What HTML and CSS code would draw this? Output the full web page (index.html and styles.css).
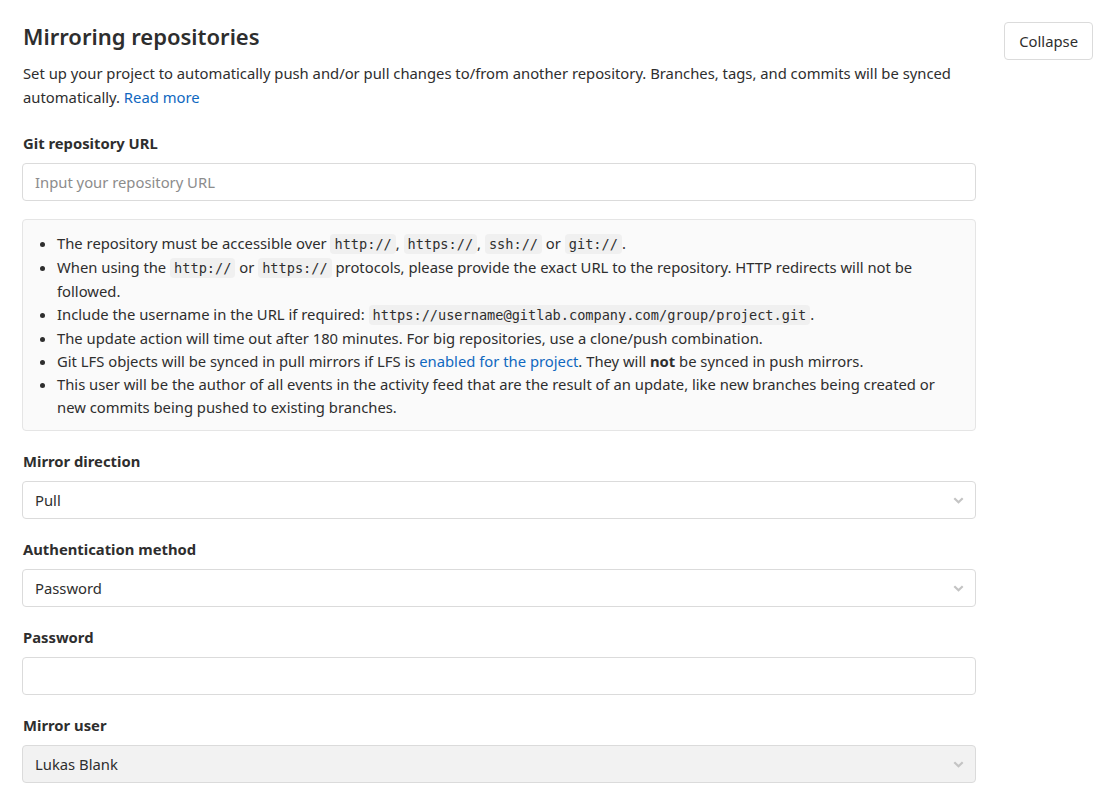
FILE: index.html
```html
<!DOCTYPE html>
<html>
<head>
<meta charset="utf-8">
<link rel="stylesheet" href="styles.css">
</head>
<body>
<div class="page">
  <div class="header">
    <div class="header-text">
      <h2 class="title">Mirroring repositories</h2>
      <p class="lead">Set up your project to automatically push and/or pull changes to/from another repository. Branches, tags, and commits will be synced automatically. <a href="#" class="link">Read more</a></p>
    </div>
    <button class="btn">Collapse</button>
  </div>
  <div class="form">
    <div class="group">
      <label class="label">Git repository URL</label>
      <div class="input placeholder">Input your repository URL</div>
    </div>
    <div class="info">
      <ul class="list">
        <li>The repository must be accessible over <code>http://</code>, <code>https://</code>, <code>ssh://</code> or <code>git://</code>.</li>
        <li>When using the <code>http://</code> or <code>https://</code> protocols, please provide the exact URL to the repository. HTTP redirects will not be followed.</li>
        <li>Include the username in the URL if required: <code>https://username@gitlab.company.com/group/project.git</code>.</li>
        <li>The update action will time out after 180 minutes. For big repositories, use a clone/push combination.</li>
        <li>Git LFS objects will be synced in pull mirrors if LFS is <a href="#" class="link">enabled for the project</a>. They will <strong>not</strong> be synced in push mirrors.</li>
        <li>This user will be the author of all events in the activity feed that are the result of an update, like new branches being created or new commits being pushed to existing branches.</li>
      </ul>
    </div>
    <div class="group">
      <label class="label">Mirror direction</label>
      <div class="input select"><span>Pull</span><svg class="chev" width="11" height="7" viewBox="0 0 11 7"><path d="M1.3 1.3 L5.5 5.3 L9.7 1.3" fill="none" stroke="#c4c4c4" stroke-width="2.2"/></svg></div>
    </div>
    <div class="group">
      <label class="label">Authentication method</label>
      <div class="input select"><span>Password</span><svg class="chev" width="11" height="7" viewBox="0 0 11 7"><path d="M1.3 1.3 L5.5 5.3 L9.7 1.3" fill="none" stroke="#c4c4c4" stroke-width="2.2"/></svg></div>
    </div>
    <div class="group">
      <label class="label">Password</label>
      <div class="input"></div>
    </div>
    <div class="group">
      <label class="label">Mirror user</label>
      <div class="input select disabled"><span>Lukas Blank</span><svg class="chev" width="11" height="7" viewBox="0 0 11 7"><path d="M1.3 1.3 L5.5 5.3 L9.7 1.3" fill="none" stroke="#c4c4c4" stroke-width="2.2"/></svg></div>
    </div>
  </div>
</div>
</body>
</html>
```
FILE: styles.css
```css
html, body {
  margin: 0;
  padding: 0;
  background: #fff;
}
body {
  font-family: "Noto Sans", "Open Sans", sans-serif;
  font-size: 14.8px;
  color: #2e2e2e;
}
.page {
  padding: 21px 21px 0 22px;
}
.header {
  display: flex;
  justify-content: space-between;
  align-items: flex-start;
}
.header-text {
  width: 954px;
}
.title {
  margin: 0 0 0 1px;
  font-size: 22px;
  font-weight: 600;
  line-height: 30px;
  color: #2e2e2e;
}
.lead {
  margin: 10px 0 0 1px;
  line-height: 24px;
}
.link {
  color: #1068bf;
  text-decoration: none;
}
.btn {
  margin-top: 1px;
  height: 38px;
  padding: 0 14px;
  border: 1px solid #dbdbdb;
  border-radius: 4px;
  background: #fff;
  font-family: inherit;
  font-size: 14.8px;
  color: #2e2e2e;
}
.form {
  width: 954px;
  margin-top: 24px;
}
.group {
  margin-bottom: 20px;
}
.label {
  display: block;
  font-weight: 700;
  line-height: 20px;
  margin: 0 0 10px 1px;
}
.input {
  box-sizing: border-box;
  height: 38px;
  border: 1px solid #dbdbdb;
  border-radius: 4px;
  background: #fff;
  padding: 0 12px;
  display: flex;
  align-items: center;
  justify-content: space-between;
}
.placeholder {
  color: #8c8c8c;
}
.select .chev {
  margin-right: -1px;
}
.disabled {
  background: #f2f2f2;
}
.info {
  box-sizing: border-box;
  margin-top: -2px;
  margin-bottom: 20px;
  border: 1px solid #e5e5e5;
  border-radius: 4px;
  background: #fafafa;
  padding: 12px 16px 11px 16px;
}
.list {
  margin: 0;
  padding-left: 18px;
  line-height: 23px;
}
code {
  font-family: "DejaVu Sans Mono", monospace;
  font-size: 13.6px;
  background: #f0f0f0;
  border-radius: 4px;
  padding: 2px 4px;
  color: #2e2e2e;
}
strong {
  font-weight: 700;
}
```
